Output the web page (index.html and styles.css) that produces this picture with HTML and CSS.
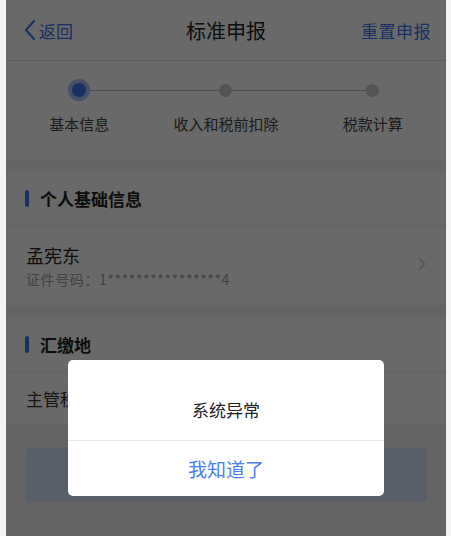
FILE: index.html
```html
<!DOCTYPE html>
<html lang="zh-CN">
<head>
<meta charset="utf-8">
<title>标准申报</title>
<link rel="stylesheet" href="styles.css">
</head>
<body>
<div class="phone">
  <header class="nav">
    <div class="back">
      <svg class="back-icon" width="14" height="24" viewBox="0 0 14 24"><path d="M11 3 L3 12 L11 21" fill="none" stroke="#3a75f0" stroke-width="2.2" stroke-linecap="round" stroke-linejoin="round"/></svg>
      <span>返回</span>
    </div>
    <div class="title">标准申报</div>
    <div class="reset">重置申报</div>
  </header>

  <section class="steps">
    <div class="step-line"></div>
    <div class="step active">
      <div class="dot-wrap"><span class="dot"></span></div>
      <div class="step-label">基本信息</div>
    </div>
    <div class="step">
      <div class="dot-wrap"><span class="dot"></span></div>
      <div class="step-label">收入和税前扣除</div>
    </div>
    <div class="step">
      <div class="dot-wrap"><span class="dot"></span></div>
      <div class="step-label">税款计算</div>
    </div>
  </section>

  <section class="card first">
    <div class="card-title"><span class="bar"></span>个人基础信息</div>
    <div class="person">
      <div class="person-info">
        <div class="person-name">孟宪东</div>
        <div class="person-id">证件号码：1****************4</div>
      </div>
      <svg class="chev" width="8" height="14" viewBox="0 0 8 14"><path d="M1.5 1.5 L6.5 7 L1.5 12.5" fill="none" stroke="#c8c8cc" stroke-width="1.6" stroke-linecap="round" stroke-linejoin="round"/></svg>
    </div>
  </section>

  <section class="card second">
    <div class="card-title"><span class="bar"></span>汇缴地</div>
    <div class="place">主管税务机关</div>
  </section>

  <div class="btn-area">
    <div class="next-btn"></div>
  </div>

  <div class="mask"></div>
  <div class="dialog">
    <div class="dialog-msg">系统异常</div>
    <div class="dialog-btn">我知道了</div>
  </div>
</div>
</body>
</html>
```
FILE: styles.css
```css
* { box-sizing: border-box; }
html, body {
  margin: 0;
  padding: 0;
  background: #f2f3f5;
  width: 451px;
  height: 536px;
  overflow: hidden;
  font-family: "Noto Sans CJK SC", "Noto Sans", "Liberation Sans", sans-serif;
}
.phone {
  position: relative;
  margin-left: 6px;
  width: 440px;
  height: 536px;
  background: #f2f3f5;
  overflow: hidden;
}
.nav {
  height: 61px;
  background: #fff;
  border-bottom: 1px solid #e3e3e6;
  display: flex;
  align-items: center;
  justify-content: space-between;
  padding: 0 15px 0 17px;
  position: relative;
}
.back {
  display: flex;
  align-items: center;
  color: #3a75f0;
  font-size: 17px;
  gap: 2px;
}
.title {
  position: absolute;
  left: 0;
  right: 0;
  text-align: center;
  font-size: 20px;
  color: #222;
  pointer-events: none;
}
.reset {
  color: #3a75f0;
  font-size: 17px;
  letter-spacing: 0.5px;
}
.steps {
  position: relative;
  height: 99px;
  background: #fff;
  display: grid;
  grid-template-columns: 1fr 1fr 1fr;
}
.step {
  display: flex;
  flex-direction: column;
  align-items: center;
  position: relative;
}
.dot-wrap {
  margin-top: 18px;
  width: 22px;
  height: 22px;
  display: flex;
  align-items: center;
  justify-content: center;
}
.dot {
  width: 13px;
  height: 13px;
  border-radius: 50%;
  background: #c9c9ce;
}
.step.active .dot-wrap {
  border-radius: 50%;
  background: #a9c3f7;
}
.step.active .dot {
  width: 14px;
  height: 14px;
  background: #3a75f0;
}
.step-label {
  margin-top: 12px;
  font-size: 15px;
  color: #444;
}
.step-line {
  position: absolute;
  left: 74px;
  right: 73px;
  top: 29px;
  height: 1px;
  background: #b8b8bd;
}
.card {
  background: #fff;
}
.card.first { margin-top: 11px; }
.card.second { margin-top: 12px; }
.card-title {
  height: 55px;
  display: flex;
  align-items: center;
  padding-left: 19px;
  font-size: 17px;
  font-weight: bold;
  color: #222;
  border-bottom: 1px solid #ececef;
}
.bar {
  width: 4px;
  height: 17px;
  border-radius: 2px;
  background: #3a75f0;
  margin-right: 11px;
}
.person {
  height: 79px;
  display: flex;
  align-items: center;
  justify-content: space-between;
  padding: 0 20px 0 20px;
}
.person-name {
  font-size: 18px;
  color: #222;
  line-height: 24px;
}
.person-id {
  font-size: 14px;
  color: #a0a0a0;
  line-height: 20px;
  margin-top: 2px;
  letter-spacing: 0.6px;
}
.chev { margin-top: -4px; }
.place {
  height: 52px;
  display: flex;
  align-items: center;
  padding-left: 20px;
  font-size: 17px;
  color: #333;
}
.btn-area {
  padding: 24px 19px 0 20px;
}
.next-btn {
  height: 54px;
  border-radius: 4px;
  background: #d9e6ff;
}
.mask {
  position: absolute;
  inset: 0;
  z-index: 10;
  background: rgba(0, 0, 0, 0.59);
}
.dialog {
  position: absolute;
  z-index: 11;
  left: 62px;
  top: 360px;
  width: 316px;
  height: 136px;
  background: #fff;
  border-radius: 5px;
  display: flex;
  flex-direction: column;
}
.dialog-msg {
  height: 81px;
  display: flex;
  align-items: center;
  justify-content: center;
  padding-top: 18px;
  font-size: 17px;
  color: #222;
  border-bottom: 1px solid #e8e8ea;
}
.dialog-btn {
  flex: 1;
  display: flex;
  align-items: center;
  justify-content: center;
  font-size: 19px;
  color: #4a7ef5;
}
```
